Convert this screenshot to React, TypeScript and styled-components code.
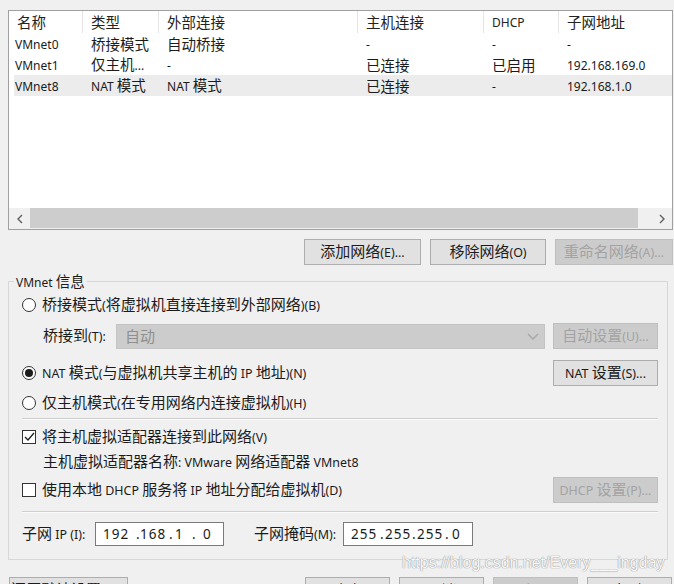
import styled, { createGlobalStyle } from 'styled-components';

const GlobalStyle = createGlobalStyle`
  html, body {
    margin: 0;
    padding: 0;
    background: #f0f0f0;
  }
  * {
    box-sizing: border-box;
  }
`;

const COLS = '69px 76px 199px 126px 75px 1fr';

const Window = styled.div`
  position: relative;
  width: 674px;
  height: 584px;
  overflow: hidden;
  padding: 10px 1px 0 8px;
  display: flex;
  flex-direction: column;
  background: #f0f0f0;
  color: #1b1b1b;
  font-family: "Noto Sans CJK SC", "Noto Sans", sans-serif;
  font-size: 15px;
`;

const Run = styled.span`
  white-space: pre;
`;

const Latin = styled.span`
  font-family: "Noto Sans", "Liberation Sans", sans-serif;
  font-size: 0.83em;
`;

const ListBox = styled.div`
  flex: none;
  height: 220px;
  border: 1px solid #a0a0a0;
  background: #fff;
  display: flex;
  flex-direction: column;
  font-size: 14.5px;
  line-height: 20px;
`;

const HeaderRow = styled.div`
  display: grid;
  grid-template-columns: ${COLS};
  height: 22px;
  margin-left: 5px;
`;

const HeaderCell = styled.div<{ $first?: boolean; $last?: boolean }>`
  display: flex;
  align-items: center;
  padding-left: ${({ $first }) => ($first ? 3 : 8)}px;
  border-right: ${({ $last }) => ($last ? 'none' : '1px solid #e5e5e5')};
  white-space: nowrap;
  color: #222;
`;

const Row = styled.div<{ $selected?: boolean }>`
  display: grid;
  grid-template-columns: ${COLS};
  height: 21px;
  margin-left: 5px;
  align-items: center;
  background: ${({ $selected }) => ($selected ? '#ececec' : 'transparent')};
`;

const Cell = styled.div<{ $first?: boolean }>`
  padding-left: ${({ $first }) => ($first ? 1 : 8)}px;
  white-space: nowrap;
`;

const HScroll = styled.div`
  margin-top: auto;
  height: 21px;
  display: flex;
  background: #f0f0f0;
`;

const ScrollArrow = styled.div`
  width: 21px;
  display: flex;
  align-items: center;
  justify-content: center;
`;

const ScrollTrack = styled.div`
  flex: 1;
  display: flex;
  padding: 0 13px 1px 0;
`;

const Thumb = styled.div`
  flex: 1;
  background: #cdcdcd;
`;

const ActionRow = styled.div`
  display: flex;
  justify-content: flex-end;
  gap: 9px;
  margin-top: 9px;
`;

const Button = styled.button<{ $w: number }>`
  width: ${({ $w }) => $w}px;
  height: 26px;
  flex: none;
  padding: 0;
  margin: 0;
  border: 1px solid #adadad;
  background: #e1e1e1;
  color: #1b1b1b;
  font: inherit;
  font-size: 15px;
  line-height: 20px;
  white-space: nowrap;

  &:disabled {
    border-color: #bfbfbf;
    background: #cccccc;
    color: #a3a3a3;
  }
`;

const Group = styled.div`
  margin: 16px 5px 0 0;
  height: 279px;
  flex: none;
  border: 1px solid #d7d7d7;
  display: flex;
  flex-direction: column;
  padding: 0 9px 0 13px;
`;

const Legend = styled.div`
  align-self: flex-start;
  margin: -11px 0 0 -8px;
  padding: 0 2px;
  height: 20px;
  line-height: 20px;
  background: #f0f0f0;
  font-size: 14.5px;
`;

const GRow = styled.div<{ $h: number; $mt: number; $indent?: number }>`
  display: flex;
  align-items: center;
  height: ${({ $h }) => $h}px;
  margin-top: ${({ $mt }) => $mt}px;
  padding-left: ${({ $indent }) => $indent ?? 0}px;
  white-space: nowrap;
  line-height: 20px;
`;

const RadioCircle = styled.span<{ $checked?: boolean }>`
  flex: none;
  width: 14px;
  height: 14px;
  margin-right: 6px;
  border-radius: 50%;
  border: 1px solid #333;
  background: #fff;
  display: inline-flex;
  align-items: center;
  justify-content: center;

  &::after {
    content: '';
    width: 8px;
    height: 8px;
    border-radius: 50%;
    background: #1b1b1b;
    display: ${({ $checked }) => ($checked ? 'block' : 'none')};
  }
`;

const CheckBox = styled.span`
  flex: none;
  width: 14px;
  height: 14px;
  margin-right: 6px;
  border: 1px solid #333;
  background: #fff;
  display: inline-flex;
  align-items: center;
  justify-content: center;
`;

const FieldLabel = styled.span<{ $w: number; $ml?: number }>`
  flex: none;
  width: ${({ $w }) => $w}px;
  margin-left: ${({ $ml }) => $ml ?? 0}px;
`;

const Select = styled.div`
  flex: 1;
  height: 25px;
  margin-right: 8px;
  padding: 0 5px 0 8px;
  display: flex;
  align-items: center;
  justify-content: space-between;
  background: #cccccc;
  border: 1px solid #c4c4c4;
  color: #8f8f8f;
`;

const SideButton = styled(Button)`
  margin-left: auto;
`;

const Separator = styled.div<{ $mt: number }>`
  margin-top: ${({ $mt }) => $mt}px;
  height: 2px;
  border-top: 1px solid #cfcfcf;
  border-bottom: 1px solid #fbfbfb;
`;

const IpBox = styled.div<{ $w: number }>`
  flex: none;
  width: ${({ $w }) => $w}px;
  height: 24px;
  padding-left: 7px;
  display: flex;
  align-items: center;
  background: #fff;
  border: 1px solid #7a7a7a;
  font-family: "Noto Sans", sans-serif;
  font-size: 13.5px;
  letter-spacing: 1px;
  color: #1b1b1b;
`;

const Seg = styled.span<{ $w?: number }>`
  flex: none;
  width: ${({ $w }) => ($w ? `${$w}px` : 'auto')};
`;

const Footer = styled.div`
  display: flex;
  gap: 9px;
  margin: 17px 1px 0 1px;
`;

const Spacer = styled.div`
  flex: 1;
`;

const Watermark = styled.div`
  position: absolute;
  left: 402px;
  top: 554px;
  font-family: "Liberation Sans", Arial, sans-serif;
  font-size: 16px;
  color: #f7f7f7;
  text-shadow: 0 0 1px #8c8c8c, 0 0 1px #a0a0a0;
  white-space: nowrap;
  pointer-events: none;
`;

function T({ children }: { children: string }) {
  const parts = children.split(/([\x20-\x7e]+)/);
  return (
    <Run>
      {parts.map((p, i) => (i % 2 ? <Latin key={i}>{p}</Latin> : p))}
    </Run>
  );
}

function Ip({ parts, w }: { parts: [string, number?][]; w: number }) {
  return (
    <IpBox $w={w}>
      {parts.map(([text, width], i) => (
        <Seg key={i} $w={width}>
          {text}
        </Seg>
      ))}
    </IpBox>
  );
}

function Chevron({ dir }: { dir: 'left' | 'right' | 'down' }) {
  const pts =
    dir === 'left' ? '6,1 2,5 6,9' : dir === 'right' ? '2,1 6,5 2,9' : '1,3 6,8 11,3';
  const w = dir === 'down' ? 12 : 8;
  return (
    <svg width={w} height="10" viewBox={`0 0 ${w} 10`}>
      <polyline
        points={pts}
        fill="none"
        stroke={dir === 'down' ? '#a8a8a8' : '#606060'}
        strokeWidth="1.4"
      />
    </svg>
  );
}

const headers = ['名称', '类型', '外部连接', '主机连接', 'DHCP', '子网地址'];

const networks = [
  ['VMnet0', '桥接模式', '自动桥接', '-', '-', '-'],
  ['VMnet1', '仅主机...', '-', '已连接', '已启用', '192.168.169.0'],
  ['VMnet8', 'NAT 模式', 'NAT 模式', '已连接', '-', '192.168.1.0'],
];

export default function App() {
  return (
    <Window>
      <GlobalStyle />

      <ListBox>
        <HeaderRow>
          {headers.map((h, i) => (
            <HeaderCell key={h} $first={i === 0} $last={i === headers.length - 1}>
              <T>{h}</T>
            </HeaderCell>
          ))}
        </HeaderRow>
        {networks.map((row, r) => (
          <Row key={row[0]} $selected={r === 2}>
            {row.map((c, i) => (
              <Cell key={i} $first={i === 0}>
                <T>{c}</T>
              </Cell>
            ))}
          </Row>
        ))}
        <HScroll>
          <ScrollArrow>
            <Chevron dir="left" />
          </ScrollArrow>
          <ScrollTrack>
            <Thumb />
          </ScrollTrack>
          <ScrollArrow>
            <Chevron dir="right" />
          </ScrollArrow>
        </HScroll>
      </ListBox>

      <ActionRow>
        <Button $w={117}>
          <T>添加网络(E)...</T>
        </Button>
        <Button $w={116}>
          <T>移除网络(O)</T>
        </Button>
        <Button $w={118} disabled>
          <T>重命名网络(A)...</T>
        </Button>
      </ActionRow>

      <Group>
        <Legend>
          <T>VMnet 信息</T>
        </Legend>

        <GRow $h={24} $mt={2}>
          <RadioCircle />
          <T>桥接模式(将虚拟机直接连接到外部网络)(B)</T>
        </GRow>

        <GRow $h={26} $mt={6} $indent={21}>
          <FieldLabel $w={73}>
            <T>桥接到(T):</T>
          </FieldLabel>
          <Select>
            <span>自动</span>
            <Chevron dir="down" />
          </Select>
          <Button $w={105} disabled>
            <T>自动设置(U)...</T>
          </Button>
        </GRow>

        <GRow $h={26} $mt={11}>
          <RadioCircle $checked />
          <T>NAT 模式(与虚拟机共享主机的 IP 地址)(N)</T>
          <SideButton $w={105}>
            <T>NAT 设置(S)...</T>
          </SideButton>
        </GRow>

        <GRow $h={24} $mt={5}>
          <RadioCircle />
          <T>仅主机模式(在专用网络内连接虚拟机)(H)</T>
        </GRow>

        <Separator $mt={3} />

        <GRow $h={22} $mt={6}>
          <CheckBox>
            <svg width="11" height="10" viewBox="0 0 11 10">
              <polyline points="1,5 4,8 10,1" fill="none" stroke="#1b1b1b" strokeWidth="1.3" />
            </svg>
          </CheckBox>
          <T>将主机虚拟适配器连接到此网络(V)</T>
        </GRow>

        <GRow $h={22} $mt={3} $indent={21}>
          <T>主机虚拟适配器名称: VMware 网络适配器 VMnet8</T>
        </GRow>

        <GRow $h={26} $mt={4}>
          <CheckBox />
          <T>使用本地 DHCP 服务将 IP 地址分配给虚拟机(D)</T>
          <SideButton $w={105} disabled>
            <T>DHCP 设置(P)...</T>
          </SideButton>
        </GRow>

        <Separator $mt={8} />

        <GRow $h={24} $mt={9}>
          <FieldLabel $w={73}>
            <T>子网 IP (I):</T>
          </FieldLabel>
          <Ip
            w={129}
            parts={[['192', 33], ['.', 4], ['168', 29], ['.', 6], ['1', 17], ['.', 11], ['0']]}
          />
          <FieldLabel $w={89} $ml={30}>
            <T>子网掩码(M):</T>
          </FieldLabel>
          <Ip
            w={130}
            parts={[['255', 29], ['.', 5], ['255', 27], ['.', 5], ['255', 28], ['.', 7], ['0']]}
          />
        </GRow>
      </Group>

      <Footer>
        <Button $w={119}>
          <T>还原默认设置(R)...</T>
        </Button>
        <Spacer />
        <Button $w={85}>确定</Button>
        <Button $w={85}>取消</Button>
        <Button $w={85} disabled>
          应用
        </Button>
        <Button $w={85}>帮助</Button>
      </Footer>

      <Watermark>https://blog.csdn.net/Every___ingday</Watermark>
    </Window>
  );
}
